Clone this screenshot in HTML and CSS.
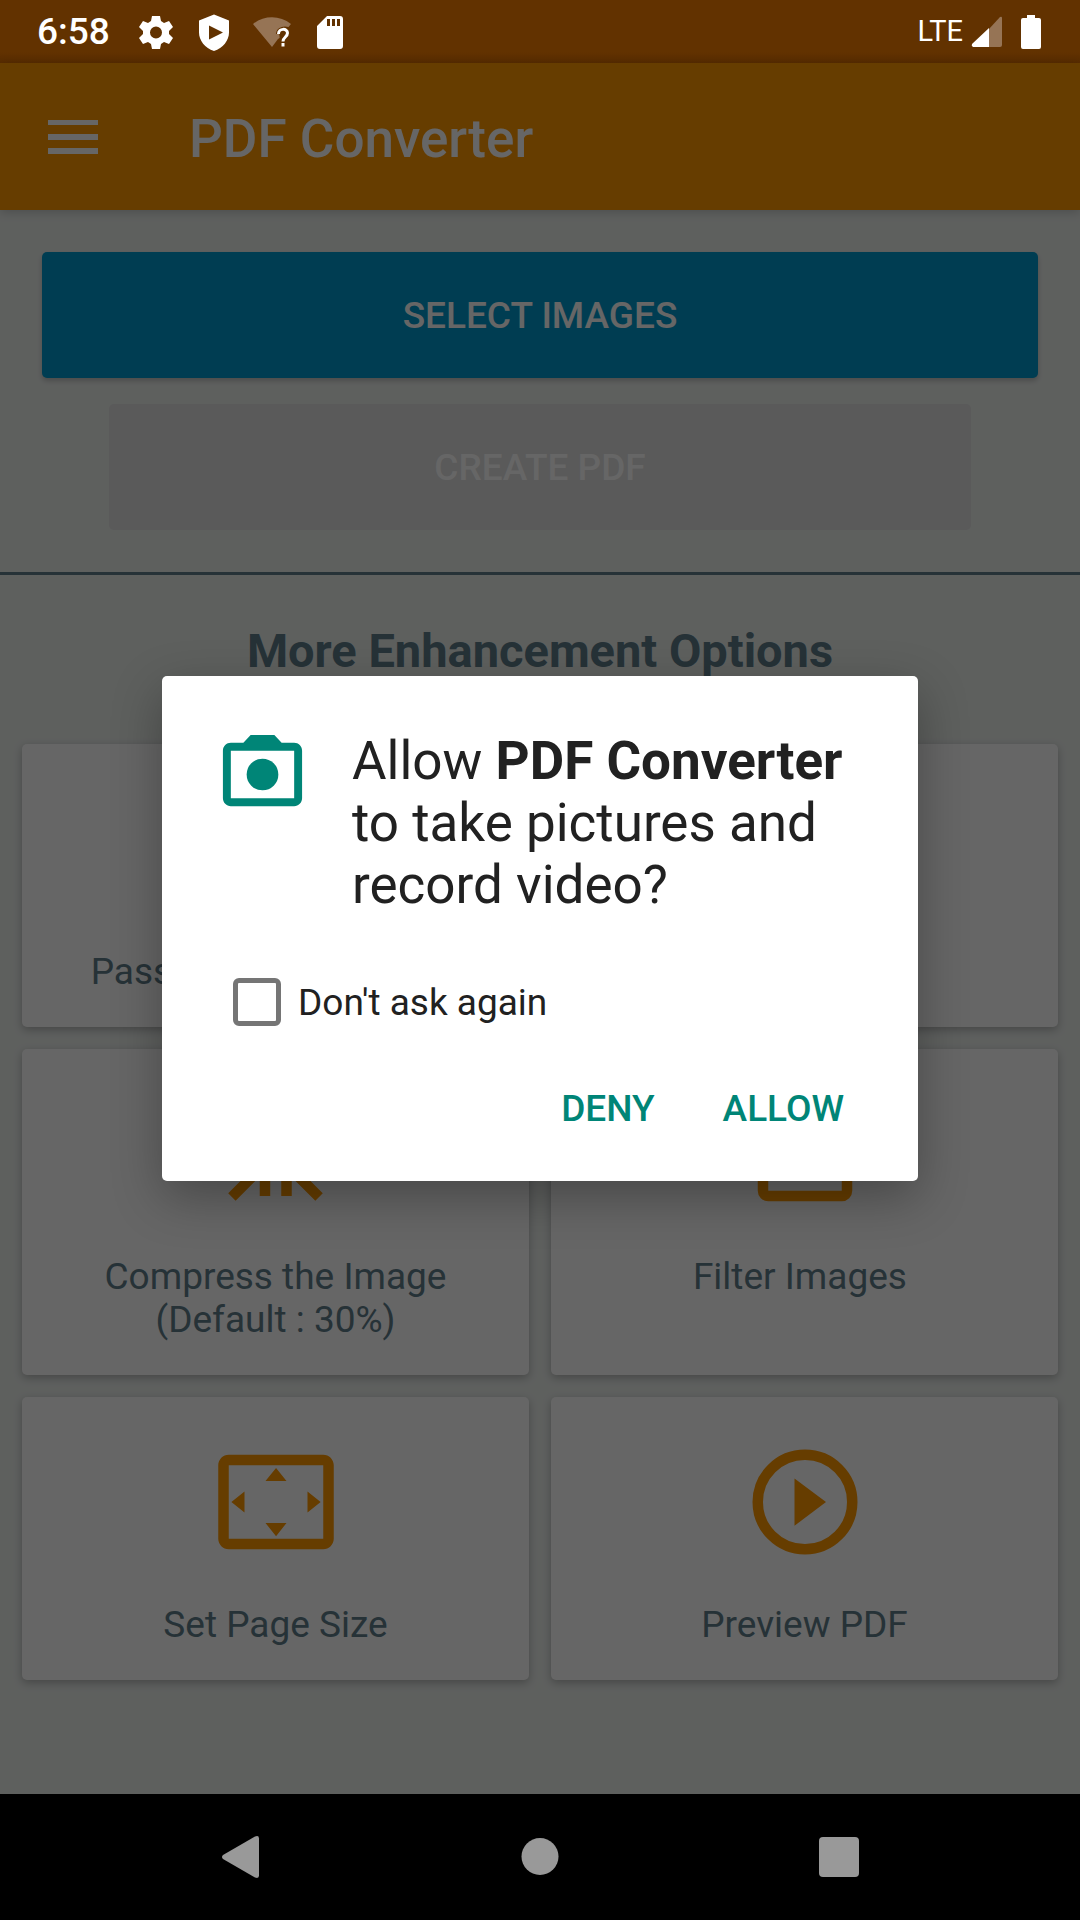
FILE: index.html
```html
<!DOCTYPE html>
<html lang="en">
<head>
<meta charset="utf-8">
<meta name="viewport" content="width=device-width, initial-scale=1">
<title>PDF Converter</title>
<link rel="stylesheet" href="styles.css">
</head>
<body>
<div class="status-bar">
  <div class="status-group">
    <span class="clock">6:58</span>
    <svg class="status-icon" viewBox="0 0 40 40" aria-hidden="true"><path fill="#fff" fill-rule="evenodd" d="M16 4h8l1 5 3 2 5-2 4 6-4 4v3l4 4-4 6-5-2-3 2-1 5h-8l-1-5-3-2-5 2-4-6 4-4v-3l-4-4 4-6 5 2 3-2zM20 14.500a6 6 0 1 0 0 12a6 6 0 1 0 0-12z"/></svg>
    <svg class="status-icon" viewBox="0 0 40 40" aria-hidden="true"><path fill="#fff" fill-rule="evenodd" d="M20 2.500l15 6v12c0 8-6 15.500-15 18.500c-9-3-15-10.500-15-18.500v-12zM15 13.500v14l14-7z"/></svg>
    <svg class="status-icon" viewBox="0 0 40 40" aria-hidden="true"><path fill="#967455" d="M1 12C12 3 28 3 39 12L36.500 15C31 13 24 16 24 22H27C28 26 28 26 26 27L20 35z"/><path fill="none" stroke="#fff" stroke-width="3" d="M26.500 22c0-6 9-6 9-1c0 4-4.500 4-4.500 8.500"/><path fill="#fff" d="M29.500 31h3v3.500h-3z"/></svg>
    <svg class="status-icon" viewBox="0 0 40 40" aria-hidden="true"><path fill="#fff" fill-rule="evenodd" d="M17 4h13q3 0 3 3v27q0 3-3 3H10q-3 0-3-3V14zM17 7v7h3V7zM22 7v7h3V7zM27 7v7h3V7z"/></svg>
  </div>
  <div class="status-group status-right">
    <span class="network">LTE</span>
    <svg class="signal" viewBox="0 0 32 32" aria-hidden="true"><path fill="#967455" d="M18 13L29 1q2-1 2 1v27q0 2-2 2H18z"/><path fill="#fff" d="M18 12v19H2q-2-1-1-3z"/></svg>
    <svg class="battery" viewBox="0 0 20 34" aria-hidden="true"><path fill="#fff" d="M6 0h8v3h4q2 0 2 2v27q0 2-2 2H2q-2 0-2-2V5q0-2 2-2h4z"/></svg>
  </div>
</div>

<div class="app">
  <header class="app-bar">
    <button class="menu-button" type="button" aria-label="Open menu">
      <svg viewBox="0 0 50 34" aria-hidden="true"><path fill="#fff" d="M0 0h50v5H0zM0 14h50v6H0zM0 28h50v6H0z"/></svg>
    </button>
    <h1 class="app-title">PDF Converter</h1>
  </header>

  <main>
    <div class="main-actions">
      <button class="action select" type="button">SELECT IMAGES</button>
      <button class="action create" type="button" disabled>CREATE PDF</button>
    </div>
    <section class="options">
      <h2 class="options-title">More Enhancement Options</h2>
      <div class="card-grid">
        <button class="card" type="button">
          <svg class="card-icon" viewBox="0 0 24 24" aria-hidden="true"><path fill="none" stroke="currentColor" stroke-width="2" d="M5 9h14v12H5zM8 9V6a4 4 0 0 1 8 0v3"/></svg>
          <span>Password Protect PDF</span>
        </button>
        <button class="card" type="button">
          <svg class="card-icon" viewBox="0 0 24 24" aria-hidden="true"><path fill="currentColor" d="M3 17.250V21h3.750L17.810 9.940l-3.750-3.750z"/></svg>
          <span>Edit Images</span>
        </button>
        <button class="card" type="button">
          <svg class="card-icon" viewBox="0 0 24 24" aria-hidden="true"><path fill="none" stroke="currentColor" stroke-width="2" d="M3.600 20.200L10 13.800M20.200 20.200L13.800 13.800M9.900 20V11M14 20V11"/></svg>
          <span>Compress the Image<br>(Default : 30%)</span>
        </button>
        <button class="card" type="button">
          <svg class="card-icon" viewBox="0 0 24 24" aria-hidden="true"><rect x="4" y="4" width="16" height="16" rx="1" fill="none" stroke="currentColor" stroke-width="2"/></svg>
          <span>Filter Images&nbsp;</span>
        </button>
        <button class="card" type="button">
          <svg class="card-icon" viewBox="0 0 24 24" aria-hidden="true"><path fill="currentColor" d="M12.010 5.500L10 8h4l-1.990-2.500zM18 10v4l2.500-1.990L18 10zM6 10l-2.500 2.010L6 14v-4zm8 6h-4l2.010 2.500L14 16zm7-13H3c-1.100 0-2 .9-2 2v14c0 1.100.9 2 2 2h18c1.100 0 2-.9 2-2V5c0-1.100-.9-2-2-2zm0 16.010H3V4.990h18v14.020z"/></svg>
          <span>Set Page Size</span>
        </button>
        <button class="card" type="button">
          <svg class="card-icon" viewBox="0 0 24 24" aria-hidden="true"><circle cx="12" cy="12" r="9" fill="none" stroke="currentColor" stroke-width="2"/><path fill="currentColor" d="M10 16.500l6-4.500-6-4.500z"/></svg>
          <span>Preview PDF</span>
        </button>
      </div>
    </section>
  </main>

  <div class="scrim">
    <div class="dialog" role="dialog" aria-modal="true" aria-labelledby="dialog-title">
      <div class="dialog-head">
        <svg class="dialog-icon" viewBox="0 0 24 24" aria-hidden="true"><path fill="#008577" d="M20 4h-3.170L15 2H9L7.170 4H4c-1.100 0-2 .9-2 2v12c0 1.100.9 2 2 2h16c1.100 0 2-.9 2-2V6c0-1.100-.9-2-2-2zm0 14H4V6h16z"/><circle cx="12" cy="12" r="4" fill="#008577"/></svg>
        <p class="dialog-title" id="dialog-title">Allow <b>PDF Converter</b> to take pictures and record video?</p>
      </div>
      <label class="remember"><input class="checkbox" type="checkbox">Don't ask again</label>
      <div class="dialog-actions">
        <button class="dialog-button" type="button">DENY</button>
        <button class="dialog-button" type="button">ALLOW</button>
      </div>
    </div>
  </div>
</div>

<nav class="nav-bar" aria-label="System">
  <button class="nav-button" type="button" aria-label="Back"><svg viewBox="0 0 44 44" aria-hidden="true"><path fill="#999" d="M4 20L36 1.500q4-1.500 4 2v37q0 3.500-4 2L4 24q-2-2 0-4z"/></svg></button>
  <button class="nav-button" type="button" aria-label="Home"><svg viewBox="0 0 44 44" aria-hidden="true"><circle cx="22" cy="21.500" r="18.500" fill="#999"/></svg></button>
  <button class="nav-button" type="button" aria-label="Recent apps"><svg viewBox="0 0 44 44" aria-hidden="true"><rect x="2" y="2" width="40" height="40" rx="4" fill="#999"/></svg></button>
</nav>
</body>
</html>
```
FILE: styles.css
```css
* {
  box-sizing: border-box;
}

body {
  margin: 0;
  min-height: 100vh;
  display: flex;
  flex-direction: column;
  background: #000;
  font-family: Roboto, "Liberation Sans", sans-serif;
  font-size: 37px;
  line-height: 43px;
}

button {
  margin: 0;
  padding: 0;
  border: 0;
  background: none;
  font: inherit;
}

svg {
  display: block;
}

/* System status bar */
.status-bar {
  height: 63px;
  padding: 0 39px 0 37px;
  display: flex;
  align-items: center;
  justify-content: space-between;
  background: linear-gradient(#623200 52px, #582c00);
  color: #fff;
}

.status-group {
  display: flex;
  align-items: center;
  gap: 18px;
}

.clock {
  margin-right: 8px;
  font-weight: 500;
}

.status-icon {
  width: 40px;
  height: 40px;
}

.status-right {
  gap: 8px;
}

.network {
  font-size: 29px;
}

.signal {
  width: 32px;
  height: 32px;
}

.battery {
  width: 20px;
  height: 34px;
  margin-left: 10px;
}

/* App screen */
.app {
  position: relative;
  flex: 1;
  background: #ebefec;
}

.app-bar {
  position: relative;
  height: 147px;
  padding-left: 48px;
  display: flex;
  align-items: center;
  gap: 91px;
  background: #ff9800;
  color: #fff;
  box-shadow: 0 2px 10px rgba(0, 0, 0, 0.2);
}

.menu-button svg {
  width: 50px;
  height: 34px;
}

.app-title {
  margin: 0;
  padding-top: 4px;
  font-size: 53px;
  line-height: 62px;
  font-weight: 500;
}

.main-actions {
  padding: 42px;
  display: flex;
  flex-direction: column;
  gap: 26px;
  border-bottom: 3px solid #607d8b;
}

.action {
  height: 126px;
  border-radius: 5px;
  color: #fff;
  font-weight: 500;
}

.select {
  background: #0099cc;
  box-shadow: 0 3px 5px rgba(0, 0, 0, 0.2);
}

.create {
  margin: 0 67px;
  background: #e0e0e0;
}

.options {
  padding: 48px 22px;
  color: #607d8b;
}

.options-title {
  margin: 0 0 65px;
  font-size: 47px;
  line-height: 56px;
  font-weight: 700;
  text-align: center;
}

.card-grid {
  display: grid;
  grid-template-columns: 1fr 1fr;
  gap: 22px;
}

.card {
  padding: 42px 16px 34px;
  display: flex;
  flex-direction: column;
  align-items: center;
  gap: 38px;
  border-radius: 5px;
  background: #fff;
  color: #607d8b;
  box-shadow: 0 3px 8px rgba(0, 0, 0, 0.25);
}

.card-icon {
  width: 126px;
  height: 126px;
  color: #ff9800;
}

/* Permission dialog */
.scrim {
  position: absolute;
  inset: 0;
  display: flex;
  align-items: center;
  justify-content: center;
  background: rgba(0, 0, 0, 0.6);
}

.dialog {
  width: 70%;
  padding: 51px 53px 26px;
  border-radius: 5px;
  background: #fff;
  color: #212121;
  box-shadow: 0 16px 50px rgba(0, 0, 0, 0.3);
}

.dialog-head {
  display: flex;
  align-items: flex-start;
  gap: 42px;
}

.dialog-icon {
  flex: none;
  width: 95px;
  height: 95px;
}

.dialog-title {
  margin: 0;
  padding-top: 3px;
  font-size: 53px;
  line-height: 62px;
}

.remember {
  margin: 62px 0 35px 18px;
  display: flex;
  align-items: center;
  gap: 17px;
}

.checkbox {
  appearance: none;
  width: 48px;
  height: 48px;
  margin: 0;
  border: 5px solid #757575;
  border-radius: 6px;
}

.dialog-actions {
  display: flex;
  justify-content: flex-end;
  gap: 26px;
}

.dialog-button {
  height: 94px;
  padding: 0 21px;
  color: #008577;
  font-weight: 500;
}

/* System navigation */
.nav-bar {
  height: 126px;
  display: flex;
  justify-content: center;
}

.nav-button {
  width: 299px;
  display: flex;
  align-items: center;
  justify-content: center;
}

.nav-button svg {
  width: 44px;
  height: 44px;
}
```
